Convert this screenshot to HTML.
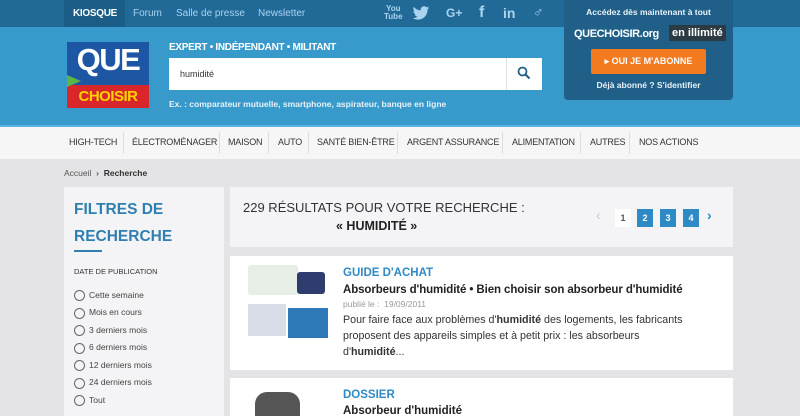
<!DOCTYPE html>
<html><head><meta charset="utf-8"><style>
*{margin:0;padding:0;box-sizing:border-box}
html,body{width:800px;height:416px;overflow:hidden}
body{background:#e4e4e6;font-family:"Liberation Sans",Arial,sans-serif;position:relative}
.a{position:absolute}
#top{left:0;top:0;width:800px;height:27px;background:#216a98}
#hdr{left:0;top:27px;width:800px;height:98px;background:#3899cb}
#nav{left:0;top:125px;width:800px;height:34px;background:#f6f6f6;border-top:2px solid #5ab3e0}
.tl{color:#a9d4ef;font-size:10px;top:8px}
.nv{top:137px;font-size:9px;color:#333;letter-spacing:-0.2px}
.sep{top:132px;width:1px;height:22px;background:#ddd}
.rd{width:11px;height:11px;border:1px solid #666;border-radius:50%;left:74px}
.rl{left:89px;font-size:8.5px;color:#444}
.pg{width:16px;height:18px;top:209px;background:#2e8ac4;color:#fff;font-size:9px;font-weight:bold;text-align:center;line-height:18px}
</style></head><body>
<div class="a" id="top"></div>
<div class="a" style="left:64px;top:0;width:61px;height:29px;background:#1b5d87"></div>
<div class="a" style="left:73px;top:8px;color:#fff;font-size:10px;font-weight:bold;letter-spacing:-0.3px">KIOSQUE</div>
<div class="a tl" style="left:133px">Forum</div>
<div class="a tl" style="left:176px">Salle de presse</div>
<div class="a tl" style="left:258px">Newsletter</div>
<div class="a" style="left:384px;top:5px;color:#a9d4ef;font-size:8px;font-weight:bold;line-height:8px;text-align:center">You<br>Tube</div>
<svg class="a" style="left:412px;top:6px" width="18" height="15" viewBox="0 0 24 20"><path d="M23 2.5c-.8.4-1.7.6-2.6.7.9-.6 1.6-1.4 2-2.5-.9.5-1.900.9-2.9 1.1C18.6.9 17.4.3 16.1.3c-2.5 0-4.5 2-4.5 4.5 0 .4 0 .7.1 1C7.900 5.600 4.600 3.800 2.400 1.100c-.4.7-.6 1.4-.6 2.300 0 1.600.8 2.900 2 3.700-.7 0-1.400-.2-2-.6v.1c0 2.200 1.600 4 3.600 4.400-.4.1-.8.2-1.200.2-.3 0-.6 0-.8-.1.6 1.800 2.200 3.100 4.200 3.100-1.500 1.200-3.500 1.900-5.600 1.900H1c2 1.300 4.400 2 6.900 2 8.300 0 12.800-6.900 12.800-12.800v-.6c.9-.6 1.600-1.400 2.300-2.200z" fill="#a9d4ef"/></svg>
<div class="a" style="left:446px;top:6px;color:#a9d4ef;font-size:12px;font-weight:bold">G+</div>
<div class="a" style="left:479px;top:4px;color:#a9d4ef;font-size:16px;font-weight:bold">f</div>
<div class="a" style="left:503px;top:5px;color:#a9d4ef;font-size:14px;font-weight:bold">in</div>
<div class="a" style="left:533px;top:4px;color:#a9d4ef;font-size:14px">♂</div>
<div class="a" id="hdr"></div>
<div class="a" style="left:564px;top:0;width:169px;height:100px;background:#1f5f88;border-radius:0 0 4px 4px"></div>
<div class="a" style="left:564px;top:7px;width:169px;text-align:center;color:#e8f2f8;font-size:8.5px;font-weight:bold">Accédez dès maintenant à tout</div>
<div class="a" style="left:574px;top:28px;color:#fff;font-size:11px;font-weight:bold;letter-spacing:-0.4px">QUECHOISIR.org</div>
<div class="a" style="left:669px;top:25px;background:#2c3a44;color:#fff;font-size:11px;font-weight:bold;padding:2px 3px">en illimité</div>
<div class="a" style="left:591px;top:49px;width:115px;height:25px;background:#f47a20;border-radius:2px;color:#fff;font-size:9px;font-weight:bold;text-align:center;line-height:25px">▸ OUI JE M'ABONNE</div>
<div class="a" style="left:564px;top:80px;width:169px;text-align:center;color:#e8f2f8;font-size:8.5px;font-weight:bold">Déjà abonné ? S'identifier</div>
<div class="a" style="left:67px;top:42px;width:82px;height:66px;background:#1d56a3"></div>
<div class="a" style="left:67px;top:85px;width:82px;height:23px;background:#d9262a"></div>
<div class="a" style="left:67px;top:75px;width:0;height:0;border-left:14px solid #5bb547;border-top:6px solid transparent;border-bottom:6px solid transparent"></div>
<div class="a" style="left:67px;top:42px;width:82px;text-align:center;color:#fff;font-size:31px;font-weight:bold;letter-spacing:-1.5px;line-height:36px">QUE</div>
<div class="a" style="left:67px;top:87px;width:82px;text-align:center;color:#ffd200;font-size:15px;font-weight:bold;letter-spacing:-0.5px;line-height:19px">CHOISIR</div>
<div class="a" style="left:169px;top:42px;color:#fff;font-size:10px;font-weight:bold;letter-spacing:-0.3px">EXPERT • INDÉPENDANT • MILITANT</div>
<div class="a" style="left:169px;top:58px;width:373px;height:32px;background:#fff"></div>
<div class="a" style="left:506px;top:58px;width:1px;height:32px;background:#e0e0e0"></div>
<div class="a" style="left:180px;top:69px;color:#333;font-size:9px">humidité</div>
<svg class="a" style="left:517px;top:66px" width="14" height="14" viewBox="0 0 14 14"><circle cx="5.5" cy="5.5" r="4" stroke="#1f5f88" stroke-width="1.8" fill="none"/><line x1="8.5" y1="8.5" x2="12.5" y2="12.5" stroke="#1f5f88" stroke-width="2"/></svg>
<div class="a" style="left:169px;top:99px;color:#e8f2f8;font-size:8.5px;font-weight:bold">Ex. : comparateur mutuelle, smartphone, aspirateur, banque en ligne</div>
<div class="a" id="nav"></div>
<div class="a nv" style="left:69px">HIGH-TECH</div><div class="a sep" style="left:123px"></div>
<div class="a nv" style="left:132px">ÉLECTROMÉNAGER</div><div class="a sep" style="left:219px"></div>
<div class="a nv" style="left:228px">MAISON</div><div class="a sep" style="left:268px"></div>
<div class="a nv" style="left:278px">AUTO</div><div class="a sep" style="left:308px"></div>
<div class="a nv" style="left:317px">SANTÉ BIEN-ÊTRE</div><div class="a sep" style="left:397px"></div>
<div class="a nv" style="left:407px">ARGENT ASSURANCE</div><div class="a sep" style="left:502px"></div>
<div class="a nv" style="left:512px">ALIMENTATION</div><div class="a sep" style="left:580px"></div>
<div class="a nv" style="left:590px">AUTRES</div><div class="a sep" style="left:629px"></div>
<div class="a nv" style="left:639px">NOS ACTIONS</div>
<div class="a" style="left:64px;top:168px;font-size:8.5px;color:#555">Accueil &nbsp;<b style="color:#555">›</b>&nbsp; <b style="color:#333">Recherche</b></div>
<div class="a" style="left:64px;top:187px;width:160px;height:240px;background:#f4f4f6"></div>
<div class="a" style="left:74px;top:196px;color:#2f7fb0;font-size:15.5px;font-weight:bold;line-height:27px">FILTRES DE<br>RECHERCHE</div>
<div class="a" style="left:74px;top:250px;width:28px;height:2px;background:#2f7fb0"></div>
<div class="a" style="left:74px;top:267px;font-size:7.5px;color:#333">DATE DE PUBLICATION</div>
<div class="a rd" style="top:290px"></div><div class="a rl" style="top:290px">Cette semaine</div>
<div class="a rd" style="top:308px"></div><div class="a rl" style="top:307px">Mois en cours</div>
<div class="a rd" style="top:325px"></div><div class="a rl" style="top:325px">3 derniers mois</div>
<div class="a rd" style="top:343px"></div><div class="a rl" style="top:342px">6 derniers mois</div>
<div class="a rd" style="top:360px"></div><div class="a rl" style="top:360px">12 derniers mois</div>
<div class="a rd" style="top:378px"></div><div class="a rl" style="top:377px">24 derniers mois</div>
<div class="a rd" style="top:395px"></div><div class="a rl" style="top:395px">Tout</div>
<div class="a" style="left:230px;top:187px;width:503px;height:60px;background:#f4f4f6"></div>
<div class="a" style="left:243px;top:200px;font-size:13px;color:#333">229 RÉSULTATS POUR VOTRE RECHERCHE :</div>
<div class="a" style="left:336px;top:219px;font-size:12.5px;color:#222;font-weight:bold">« HUMIDITÉ »</div>
<div class="a" style="left:596px;top:207px;color:#c8c8c8;font-size:14px">‹</div>
<div class="a pg" style="left:615px;background:#fff;color:#555">1</div>
<div class="a pg" style="left:637px">2</div>
<div class="a pg" style="left:660px">3</div>
<div class="a pg" style="left:683px">4</div>
<div class="a" style="left:707px;top:207px;color:#2e8ac4;font-size:14px;font-weight:bold">›</div>
<div class="a" style="left:230px;top:256px;width:503px;height:114px;background:#fff"></div>
<div class="a" style="left:248px;top:265px;width:50px;height:30px;background:#e6eee6;border-radius:3px"></div>
<div class="a" style="left:297px;top:272px;width:28px;height:22px;background:#2f3d6e;border-radius:3px"></div>
<div class="a" style="left:248px;top:304px;width:38px;height:32px;background:#d8dde8"></div>
<div class="a" style="left:288px;top:308px;width:40px;height:30px;background:#2f78b8"></div>
<div class="a" style="left:343px;top:267px;color:#2f8ac6;font-size:11.5px;font-weight:bold">GUIDE D'ACHAT</div>
<div class="a" style="left:343px;top:284px;color:#222;font-size:11.5px;font-weight:bold;letter-spacing:-0.1px">Absorbeurs d'humidité • Bien choisir son absorbeur d'humidité</div>
<div class="a" style="left:343px;top:299px;color:#999;font-size:8.5px">publié le : &nbsp;19/09/2011</div>
<div class="a" style="left:343px;top:312px;white-space:nowrap;color:#333;font-size:10.7px;line-height:16px">Pour faire face aux problèmes d'<b>humidité</b> des logements, les fabricants<br>proposent des appareils simples et à petit prix : les absorbeurs<br>d'<b>humidité</b>...</div>
<div class="a" style="left:230px;top:378px;width:503px;height:40px;background:#fff"></div>
<div class="a" style="left:255px;top:392px;width:45px;height:30px;background:#555;border-radius:12px 12px 0 0"></div>
<div class="a" style="left:343px;top:389px;color:#2f8ac6;font-size:11.5px;font-weight:bold">DOSSIER</div>
<div class="a" style="left:343px;top:405px;color:#222;font-size:11.5px;font-weight:bold">Absorbeur d'humidité</div>
</body></html>
